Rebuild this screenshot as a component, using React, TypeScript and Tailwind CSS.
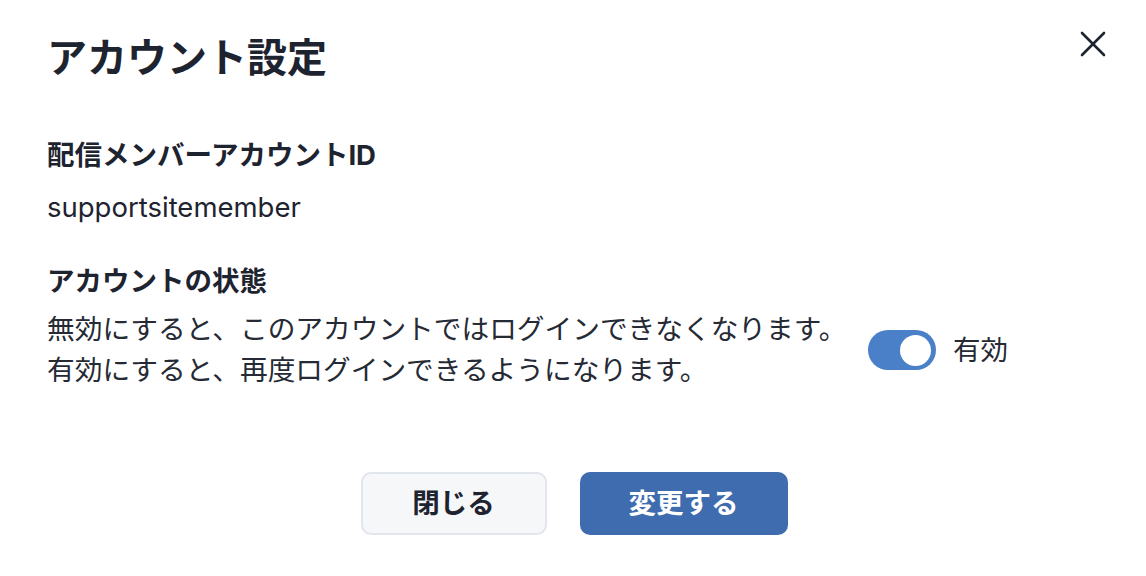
import React from "react";

export default function App() {
  const font = { fontFamily: 'Inter, "Noto Sans CJK JP", sans-serif' };
  return (
    <div className="w-[1146px] h-[576px] bg-white text-[#1e2330] overflow-hidden" style={font}>
      <div className="pl-[47px] pr-[40px]">
        <div className="flex justify-between items-start">
          <h1 className="mt-[34px] text-[40px] leading-[48px] font-bold">アカウント設定</h1>
          <button className="mt-[31px] w-[26px] h-[26px] flex items-center justify-center text-[#1e2330]">
            <svg width="26" height="26" viewBox="0 0 26 26" fill="none" stroke="currentColor" strokeWidth="2.6" strokeLinecap="round">
              <line x1="2" y1="2" x2="24" y2="24" />
              <line x1="24" y1="2" x2="2" y2="24" />
            </svg>
          </button>
        </div>
        <div className="mt-[53px] text-[27.5px] leading-[40px] font-bold">配信メンバーアカウントID</div>
        <div className="mt-[12px] text-[27.5px] leading-[40px]">supportsitemember</div>
        <div className="mt-[34px] text-[27.5px] leading-[40px] font-bold">アカウントの状態</div>
        <div className="mt-[8px] flex items-center">
          <div className="w-[791px] whitespace-nowrap text-[27.7px] leading-[41px] text-[#252a35]">
            <div>無効にすると、このアカウントではログインできなくなります。</div>
            <div>有効にすると、再度ログインできるようになります。</div>
          </div>
          <div className="ml-[30px] w-[68px] h-[40px] rounded-full bg-[#4a80c8] flex items-center justify-end pr-[5px]">
            <div className="w-[31px] h-[31px] rounded-full bg-white" />
          </div>
          <span className="ml-[17px] text-[27.5px] leading-[40px] text-[#252a35]">有効</span>
        </div>
      </div>
      <div className="mt-[81px] flex justify-center gap-[33px] pl-[2px]">
        <button className="w-[186px] h-[63px] rounded-[10px] border-2 border-[#e1e5ec] bg-[#f6f7f9] text-[27.5px] font-bold text-[#1e2330]">
          閉じる
        </button>
        <button className="w-[208px] h-[63px] rounded-[10px] bg-[#3f6cae] text-[27.5px] font-bold text-white">
          変更する
        </button>
      </div>
    </div>
  );
}
